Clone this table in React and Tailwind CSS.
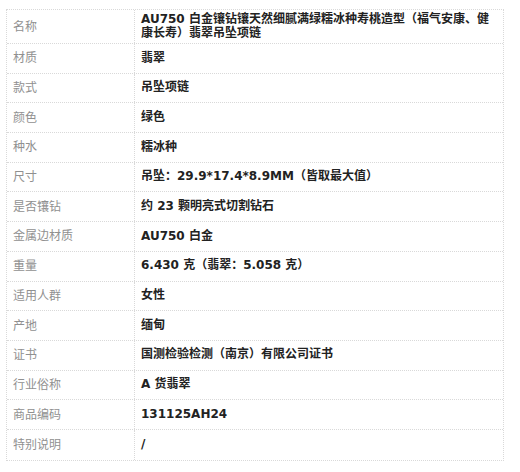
const rows = [
  ["名称", "AU750 白金镶钻镶天然细腻满绿糯冰种寿桃造型（福气安康、健康长寿）翡翠吊坠项链"],
  ["材质", "翡翠"],
  ["款式", "吊坠项链"],
  ["颜色", "绿色"],
  ["种水", "糯冰种"],
  ["尺寸", "吊坠：29.9*17.4*8.9MM（皆取最大值）"],
  ["是否镶钻", "约 23 颗明亮式切割钻石"],
  ["金属边材质", "AU750 白金"],
  ["重量", "6.430 克（翡翠：5.058 克）"],
  ["适用人群", "女性"],
  ["产地", "缅甸"],
  ["证书", "国测检验检测（南京）有限公司证书"],
  ["行业俗称", "A 货翡翠"],
  ["商品编码", "131125AH24"],
  ["特别说明", "/"],
]

export default function App() {
  return (
    <div
      className="w-[520px] h-[472px] bg-white pt-[9px] pl-[6px]"
      style={{ fontFamily: '"DejaVu Sans", "Noto Sans CJK SC", sans-serif' }}
    >
      <div className="w-[498px] border border-dotted border-[#d9d9d9] text-[12px]">
        {rows.map(([label, value], i) => (
          <div
            key={label}
            className={
              "flex " +
              (i === 0 ? "h-[34px] " : "h-[29.7px] ") +
              (i < rows.length - 1 ? "border-b border-dotted border-[#d9d9d9]" : "")
            }
          >
            <div className="w-[128px] shrink-0 flex items-center pl-[6px] text-[#909090] border-r border-dotted border-[#d9d9d9]">
              {label}
            </div>
            <div className="flex-1 flex items-center pl-[6px] pr-[4px] font-bold text-[#222] leading-[13.5px]">
              {value}
            </div>
          </div>
        ))}
      </div>
    </div>
  )
}
